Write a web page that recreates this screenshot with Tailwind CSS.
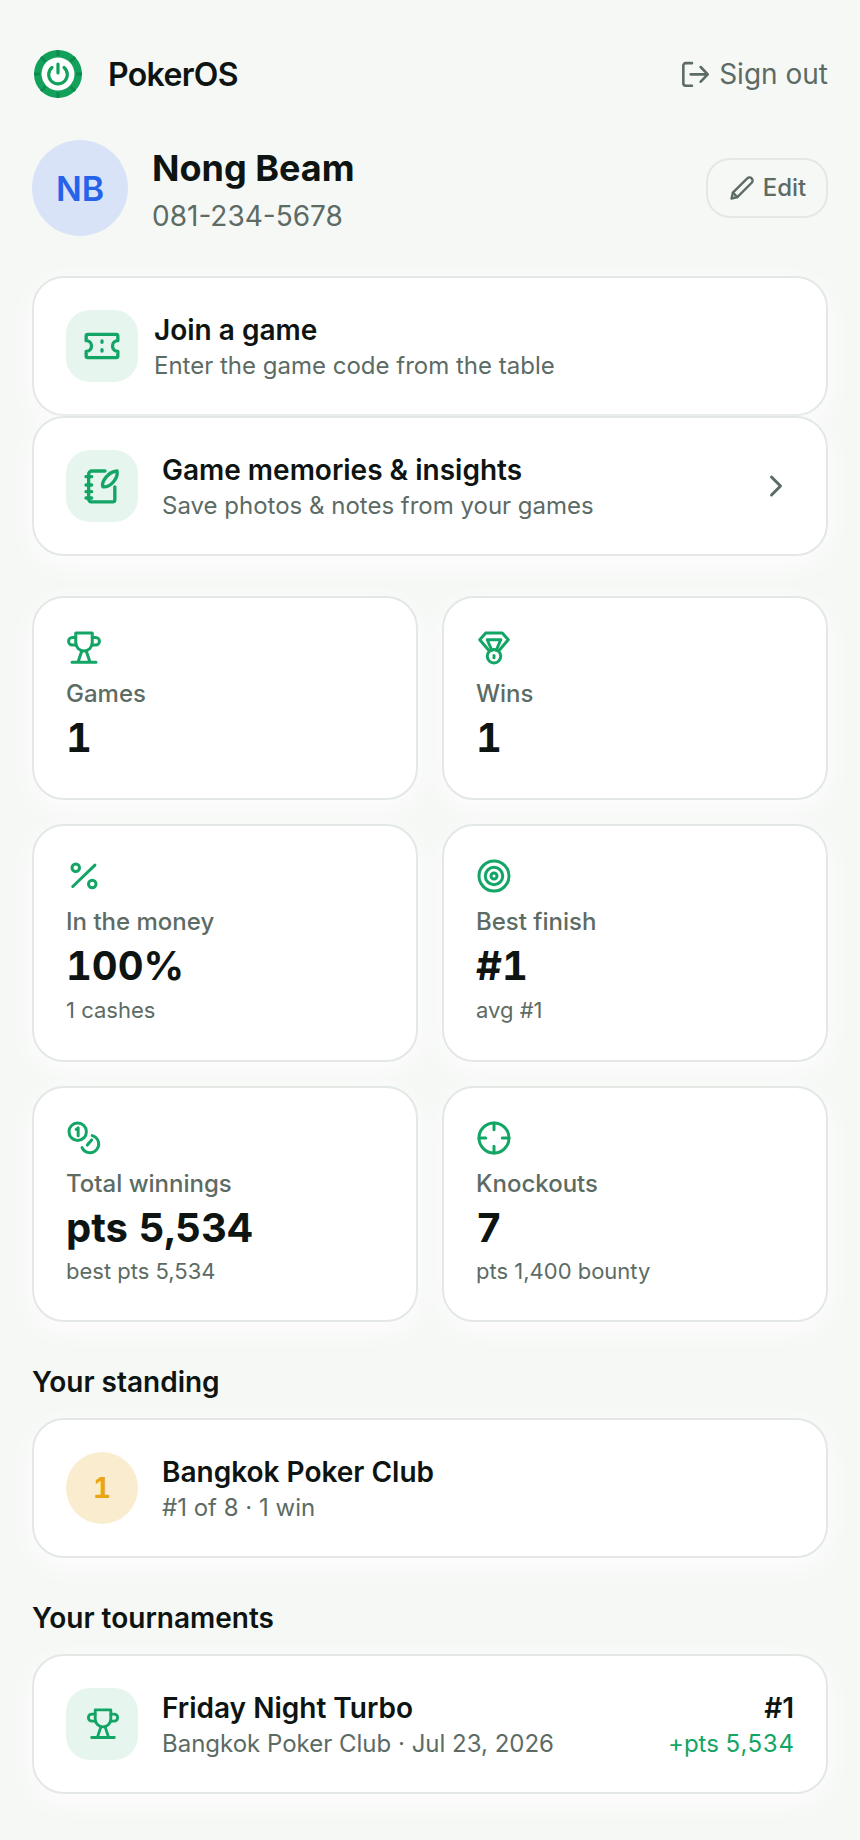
<!DOCTYPE html>
<html lang="en">

<head>
    <meta charset="UTF-8" />
    <meta name="viewport" content="width=device-width, initial-scale=1.0" />
    <title>PokerOS</title>
    <script src="https://cdn.jsdelivr.net/npm/@tailwindcss/browser@4"></script>
</head>

<body class="bg-[#f6f8f6] text-[#0d1411] font-['Inter',sans-serif] min-h-screen">
    <div class="w-[860px] px-8 pt-[50px] pb-[46px] flex flex-col">

        <!-- Header -->
        <header class="flex justify-between items-center h-12">
            <div class="flex items-center gap-[26px] pl-[2px]">
                <svg class="w-12 h-12" viewBox="0 0 48 48" fill="none">
                    <circle cx="24" cy="24" r="24" fill="#12a15a" />
                    <g stroke="#0d8a4c" stroke-width="3">
                        <path d="M24 0v6M24 42v6M0 24h6M42 24h6M7 7l4.500 4.500M36.500 36.500L41 41M41 7l-4.500 4.500M11.500 36.500L7 41" />
                    </g>
                    <circle cx="24" cy="24" r="16.500" fill="#fff" />
                    <path d="M18 17.500a9.300 9.300 0 1 0 12 0" stroke="#12a15a" stroke-width="3.200" stroke-linecap="round" />
                    <path d="M24 14v9" stroke="#12a15a" stroke-width="3.200" stroke-linecap="round" />
                </svg>
                <span class="pt-[2px] text-[32px] leading-9 font-semibold tracking-[-0.64px]">PokerOS</span>
            </div>
            <a class="flex items-center gap-[10px] text-[28px] leading-9 text-[#5c6b64]">
                <svg class="w-7 h-7" viewBox="0 0 24 24" fill="none" stroke="currentColor" stroke-width="2.200" stroke-linecap="round" stroke-linejoin="round">
                    <path d="M9.400 2.700H4a2 2 0 0 0-2 2v15.300a2 2 0 0 0 2 2h5.400" />
                    <path d="M8.300 12.300H22.800M16.900 6l6 6.300-6 6.300" />
                </svg>
                Sign out
            </a>
        </header>

        <!-- Profile -->
        <section class="flex items-center mt-[42px] h-24">
            <div class="w-24 h-24 rounded-full bg-[#d8e3f7] flex items-center justify-center text-[34px] font-semibold text-[#2563eb]">NB</div>
            <div class="ml-6 pt-1 flex-1">
                <div class="text-[36px] leading-[44px] font-bold">Nong Beam</div>
                <div class="text-[28px] leading-9 text-[#5c6b64] mt-2">081-234-5678</div>
            </div>
            <button class="flex items-center justify-center gap-[7px] w-[122px] h-[60px] rounded-3xl border-2 border-[#e3e8e6] text-[24px] font-medium text-[#5c6b64]">
                <svg class="w-7 h-7" viewBox="0 0 24 24" fill="none" stroke="currentColor" stroke-width="2" stroke-linecap="round" stroke-linejoin="round">
                    <path d="M3 21l1.200-5L16.500 3.700a2.300 2.300 0 0 1 3.800 3.800L8 19.800 3 21z" />
                    <path d="M4.200 16L8 19.800" />
                </svg>
                Edit
            </button>
        </section>

        <!-- Actions -->
        <section class="mt-10 flex flex-col">
            <div class="h-[140px] flex items-center px-[32px] bg-white border-2 border-[#e3e8e6] rounded-[32px] shadow-[0_8px_30px_rgba(255,255,255,0.8)]">
                <div class="w-[72px] h-[72px] rounded-3xl bg-[#e7f5ef] flex items-center justify-center">
                    <svg class="w-10 h-10" viewBox="0 0 24 24" fill="none" stroke="#12a565" stroke-width="2" stroke-linecap="round" stroke-linejoin="round">
                        <path d="M3.500 5h17a1 1 0 0 1 1 1v2.800a3.200 3.200 0 0 0 0 6.400V18a1 1 0 0 1-1 1h-17a1 1 0 0 1-1-1v-2.800a3.200 3.200 0 0 0 0-6.400V6a1 1 0 0 1 1-1z" />
                        <path d="M12 9v.8M12 14.200v.8" />
                    </svg>
                </div>
                <div class="ml-4 pt-[2px]">
                    <div class="text-[28px] leading-9 font-semibold">Join a game</div>
                    <div class="mt-[2px] text-[24px] leading-8 text-[#5c6b64]">Enter the game code from the table</div>
                </div>
            </div>
            <div class="h-[140px] flex items-center px-[32px] bg-white border-2 border-[#e3e8e6] rounded-[32px] shadow-[0_8px_30px_rgba(255,255,255,0.8)]">
                <div class="w-[72px] h-[72px] rounded-3xl bg-[#e7f5ef] flex items-center justify-center">
                    <svg class="w-10 h-10" viewBox="0 0 24 24" fill="none" stroke="#12a565" stroke-width="2" stroke-linecap="round" stroke-linejoin="round">
                        <path d="M13.800 3H6a2 2 0 0 0-2 2v15a1.500 1.500 0 0 0 1.500 1.500h13a1.200 1.200 0 0 0 1.200-1.200v-7.800" />
                        <path d="M2.400 6.400h3.400M2.400 11.400h3.400M2.400 15.400h3.400M2.400 19.200h3.400" />
                        <path d="M12.500 12.500c-1-3 3-9 8.500-9.500 .8 4-3.500 10-8.500 9.500z" />
                    </svg>
                </div>
                <div class="ml-6 pt-[2px] flex-1">
                    <div class="text-[28px] leading-9 font-semibold">Game memories &amp; insights</div>
                    <div class="mt-[2px] text-[24px] leading-8 text-[#5c6b64]">Save photos &amp; notes from your games</div>
                </div>
                <svg class="w-9 h-9 text-[#5c6b64]" viewBox="0 0 24 24" fill="none" stroke="currentColor" stroke-width="2" stroke-linecap="round" stroke-linejoin="round">
                    <path d="M9 6l6 6-6 6" />
                </svg>
            </div>
        </section>

        <!-- Stats -->
        <section class="mt-10 grid grid-cols-2 gap-6">
            <div class="px-8 pt-8 pb-[33px] bg-white border-2 border-[#e3e8e6] rounded-[32px] shadow-[0_8px_30px_rgba(255,255,255,0.8)]">
                <svg class="w-9 h-9" viewBox="0 0 24 24" fill="none" stroke="#12a565" stroke-width="2" stroke-linecap="round" stroke-linejoin="round">
                    <path d="M6.500 2h11v6.500c0 3-2.300 5.500-5.500 5.500s-5.500-2.500-5.500-5.500V2z" />
                    <path d="M6.500 5H4.200a2.500 2.500 0 0 0 0 5h2.600M17.500 5h2.300a2.500 2.500 0 0 1 0 5h-2.600" />
                    <path d="M10.500 14l-2.500 7.500M13.500 14l2.500 7.500M4 21.500h16" />
                </svg>
                <div class="mt-3 text-[24px] leading-8 font-medium text-[#5c6b64]">Games</div>
                <div class="mt-[1px] text-[40px] leading-[54px] font-bold tabular-nums">1</div>
            </div>
            <div class="px-8 pt-8 pb-[33px] bg-white border-2 border-[#e3e8e6] rounded-[32px] shadow-[0_8px_30px_rgba(255,255,255,0.8)]">
                <svg class="w-9 h-9" viewBox="0 0 24 24" fill="none" stroke="#12a565" stroke-width="2" stroke-linecap="round" stroke-linejoin="round">
                    <path d="M6.500 2h11l4 4.500-6 7M8.500 13.500l-6-7 4-4.500" />
                    <path d="M7.500 6.500h9M7.500 6.500l3 7M16.500 6.500l-3 7" />
                    <circle cx="12" cy="17.500" r="4.500" />
                    <path d="M12 17v1.500" />
                </svg>
                <div class="mt-3 text-[24px] leading-8 font-medium text-[#5c6b64]">Wins</div>
                <div class="mt-[1px] text-[40px] leading-[54px] font-bold tabular-nums">1</div>
            </div>
            <div class="px-8 pt-8 pb-[33px] bg-white border-2 border-[#e3e8e6] rounded-[32px] shadow-[0_8px_30px_rgba(255,255,255,0.8)]">
                <svg class="w-9 h-9" viewBox="0 0 24 24" fill="none" stroke="#12a565" stroke-width="2" stroke-linecap="round" stroke-linejoin="round">
                    <circle cx="6.500" cy="6.500" r="2.500" />
                    <circle cx="17.500" cy="17.300" r="2.500" />
                    <path d="M19.300 4.700L4.500 19" />
                </svg>
                <div class="mt-3 text-[24px] leading-8 font-medium text-[#5c6b64]">In the money</div>
                <div class="mt-[1px] text-[40px] leading-[54px] font-bold tabular-nums">100%</div>
                <div class="text-[22px] leading-[34px] text-[#5c6b64]">1 cashes</div>
            </div>
            <div class="px-8 pt-8 pb-[33px] bg-white border-2 border-[#e3e8e6] rounded-[32px] shadow-[0_8px_30px_rgba(255,255,255,0.8)]">
                <svg class="w-9 h-9" viewBox="0 0 24 24" fill="none" stroke="#12a565" stroke-width="2">
                    <circle cx="12" cy="12" r="10" />
                    <circle cx="12" cy="12" r="5.800" />
                    <circle cx="12" cy="12" r="2" />
                </svg>
                <div class="mt-3 text-[24px] leading-8 font-medium text-[#5c6b64]">Best finish</div>
                <div class="mt-[1px] text-[40px] leading-[54px] font-bold tabular-nums">#1</div>
                <div class="text-[22px] leading-[34px] text-[#5c6b64]">avg #1</div>
            </div>
            <div class="px-8 pt-8 pb-[33px] bg-white border-2 border-[#e3e8e6] rounded-[32px] shadow-[0_8px_30px_rgba(255,255,255,0.8)]">
                <svg class="w-9 h-9" viewBox="0 0 24 24" fill="none" stroke="#12a565" stroke-width="2" stroke-linecap="round" stroke-linejoin="round">
                    <circle cx="7.800" cy="7.800" r="5.800" />
                    <path d="M6.800 6.300l1.300-1v5.200" />
                    <path d="M17.500 10.400A5.800 5.800 0 1 1 10.700 18.400" />
                    <path d="M14.200 16.700l2.900-3.400" />
                </svg>
                <div class="mt-3 text-[24px] leading-8 font-medium text-[#5c6b64]">Total winnings</div>
                <div class="mt-[1px] text-[40px] leading-[54px] font-bold tabular-nums">pts 5,534</div>
                <div class="text-[22px] leading-8 text-[#5c6b64]">best pts 5,534</div>
            </div>
            <div class="px-8 pt-8 pb-[33px] bg-white border-2 border-[#e3e8e6] rounded-[32px] shadow-[0_8px_30px_rgba(255,255,255,0.8)]">
                <svg class="w-9 h-9" viewBox="0 0 24 24" fill="none" stroke="#12a565" stroke-width="2" stroke-linecap="round">
                    <circle cx="12" cy="12" r="10" />
                    <path d="M12 2v4.500M12 17.500V22M2 12h4.500M17.500 12H22" />
                </svg>
                <div class="mt-3 text-[24px] leading-8 font-medium text-[#5c6b64]">Knockouts</div>
                <div class="mt-[1px] text-[40px] leading-[54px] font-bold tabular-nums">7</div>
                <div class="text-[22px] leading-8 text-[#5c6b64]">pts 1,400 bounty</div>
            </div>
        </section>

        <!-- Standing -->
        <h2 class="mt-[42px] text-[28px] leading-9 font-semibold">Your standing</h2>
        <div class="mt-[18px] h-[140px] flex items-center px-8 bg-white border-2 border-[#e3e8e6] rounded-[32px] shadow-[0_8px_30px_rgba(255,255,255,0.8)]">
            <div class="w-[72px] h-[72px] rounded-full bg-[#faedcf] flex items-center justify-center text-[28px] font-bold text-[#eaa612] tabular-nums">1</div>
            <div class="ml-6 pt-[2px]">
                <div class="text-[28px] leading-9 font-semibold">Bangkok Poker Club</div>
                <div class="mt-[2px] text-[24px] leading-8 text-[#5c6b64]">#1 of 8 · 1 win</div>
            </div>
        </div>

        <!-- Tournaments -->
        <h2 class="mt-[42px] text-[28px] leading-9 font-semibold">Your tournaments</h2>
        <div class="mt-[18px] h-[140px] flex items-center px-8 bg-white border-2 border-[#e3e8e6] rounded-[32px] shadow-[0_8px_30px_rgba(255,255,255,0.8)]">
            <div class="w-[72px] h-[72px] rounded-3xl bg-[#e7f5ef] flex items-center justify-center">
                <svg class="w-[34px] h-[34px] ml-[2px]" viewBox="0 0 24 24" fill="none" stroke="#12a565" stroke-width="2" stroke-linecap="round" stroke-linejoin="round">
                    <path d="M6.500 2h11v6.500c0 3-2.300 5.500-5.500 5.500s-5.500-2.500-5.500-5.500V2z" />
                    <path d="M6.500 5H4.200a2.500 2.500 0 0 0 0 5h2.600M17.500 5h2.300a2.500 2.500 0 0 1 0 5h-2.600" />
                    <path d="M10.500 14l-2.500 7.500M13.500 14l2.500 7.500M4 21.500h16" />
                </svg>
            </div>
            <div class="ml-6 pt-[2px] flex-1">
                <div class="text-[28px] leading-9 font-semibold">Friday Night Turbo</div>
                <div class="mt-[2px] text-[24px] leading-8 text-[#5c6b64]">Bangkok Poker Club · Jul 23, 2026</div>
            </div>
            <div class="pt-[2px] text-right">
                <div class="text-[28px] leading-9 font-semibold">#1</div>
                <div class="mt-[2px] text-[24px] leading-8 text-[#12a565] tabular-nums">+pts 5,534</div>
            </div>
        </div>
    </div>
</body>

</html>
